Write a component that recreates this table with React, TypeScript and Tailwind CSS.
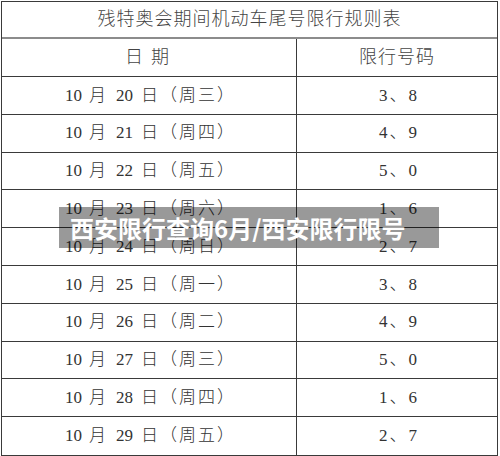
const rows: [string, string, string][] = [
  ["20", "三", "3、8"],
  ["21", "四", "4、9"],
  ["22", "五", "5、0"],
  ["23", "六", "1、6"],
  ["24", "日", "2、7"],
  ["25", "一", "3、8"],
  ["26", "二", "4、9"],
  ["27", "三", "5、0"],
  ["28", "四", "1、6"],
  ["29", "五", "2、7"],
];

const font = {
  fontFamily: '"Liberation Serif", "Noto Sans CJK SC", serif',
};

export default function App() {
  return (
    <div className="relative h-[456px] w-[500px] overflow-hidden bg-white text-[#333]" style={font}>
      <div className="ml-[1px] mt-[1px] w-[497px] border-[1.5px] border-[#3a3a3a]">
        <div className="flex h-[37px] items-center justify-center border-b-[2px] border-[#8c8c8c] text-[18px] font-light tracking-[1px] text-[#444]">
          残特奥会期间机动车尾号限行规则表
        </div>
        <div className="grid h-[38px] grid-cols-[295px_1fr] border-b-[1.5px] border-[#3a3a3a] text-[18px] font-light text-[#444]">
          <div className="flex items-center justify-center gap-[8px] border-r-[1.5px] border-[#3a3a3a] pr-[4px]">
            <span>日</span>
            <span>期</span>
          </div>
          <div className="flex items-center justify-center tracking-[1px]">限行号码</div>
        </div>
        {rows.map(([day, week, nums], i) => (
          <div
            key={day}
            className={`grid h-[37.8px] grid-cols-[295px_1fr] text-[17px] text-[#333] ${
              i < rows.length - 1 ? "border-b-[1.5px] border-[#3a3a3a]" : ""
            }`}
          >
            <div className="flex items-center border-r-[1.5px] border-[#3a3a3a] pl-[63px]">
              <span>10</span>
              <span className="ml-[7px] font-light">月</span>
              <span className="ml-[10px]">{day}</span>
              <span className="ml-[8px] font-light tracking-[2px]">日（周{week}）</span>
            </div>
            <div className="flex items-center justify-center pl-[2px]">
              <span>{nums[0]}</span>
              <span className="mx-[2px] font-light">、</span>
              <span>{nums[2]}</span>
            </div>
          </div>
        ))}
      </div>

      <div
        className="absolute left-[59px] top-[207px] flex h-[41px] w-[380px] items-center bg-black/40 pl-[11px] text-[24px] font-bold text-white"
        style={{ fontFamily: '"Noto Sans CJK SC", sans-serif' }}
      >
        西安限行查询6月/西安限行限号
      </div>
    </div>
  );
}
